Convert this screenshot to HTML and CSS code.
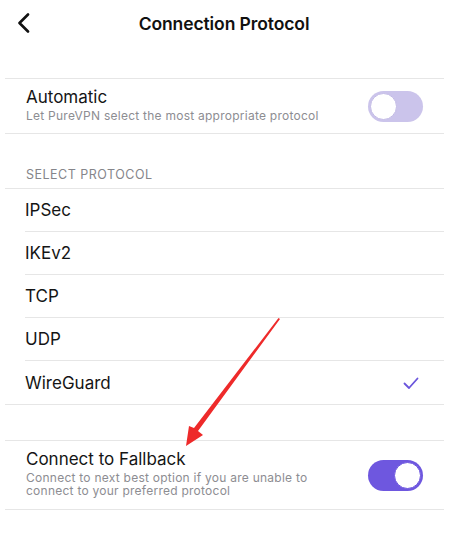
FILE: index.html
```html
<!DOCTYPE html>
<html>
<head>
<meta charset="utf-8">
<link rel="stylesheet" href="styles.css">
</head>
<body>
<div class="screen">
  <header class="topbar">
    <span class="back">
      <svg width="14" height="20" viewBox="0 0 14 20"><path d="M11 1.5 L2.5 10 L11 18.5" fill="none" stroke="#111" stroke-width="2.6" stroke-linecap="round" stroke-linejoin="round"/></svg>
    </span>
    <h1 class="title">Connection Protocol</h1>
    <span></span>
  </header>

  <section class="group first">
    <div class="setting">
      <div class="setting-text">
        <div class="setting-title">Automatic</div>
        <div class="setting-desc">Let PureVPN select the most appropriate protocol</div>
      </div>
      <span class="toggle off"><span class="knob"></span></span>
    </div>
  </section>

  <div class="section-label">SELECT PROTOCOL</div>
  <ul class="group protocols">
    <li class="proto">IPSec</li>
    <li class="proto">IKEv2</li>
    <li class="proto">TCP</li>
    <li class="proto">UDP</li>
    <li class="proto selected">WireGuard
      <svg class="check" width="16" height="13" viewBox="0 0 16 13"><path d="M1.5 6.5 L6 11 L14.5 1.5" fill="none" stroke="#6a55dc" stroke-width="1.8" stroke-linecap="round" stroke-linejoin="round"/></svg>
    </li>
  </ul>

  <section class="group fallback">
    <div class="setting tall">
      <div class="setting-text">
        <div class="setting-title big">Connect to Fallback</div>
        <div class="setting-desc wrap">Connect to next best option if you are unable to connect to your preferred protocol</div>
      </div>
      <span class="toggle on"><span class="knob"></span></span>
    </div>
  </section>

  <svg class="annot" width="465" height="550" viewBox="0 0 465 550">
    <path d="M280 319 L198 431 L203 435 L186 446 L189 426 L194 428 L278.5 318 Z" fill="#ee2a2a"/>
  </svg>
</div>
</body>
</html>
```
FILE: styles.css
```css
* { box-sizing: border-box; }
html, body { margin: 0; padding: 0; background: #fff; }
body { font-family: Inter, "Liberation Sans", Arial, sans-serif; color: #151515; }
.screen { position: relative; width: 465px; height: 550px; overflow: hidden; }

.topbar {
  height: 46px;
  display: grid;
  grid-template-columns: 1fr auto 1fr;
  align-items: center;
}
.back { padding-left: 17px; display: flex; align-items: center; }
.title { margin: 0; padding-right: 17px; font-size: 17.5px; font-weight: 600; letter-spacing: -0.1px; color: #111; }

.group {
  margin: 0 21px 0 5px;
  padding: 0;
  list-style: none;
  border-top: 1px solid #e6e6e6;
  border-bottom: 1px solid #e6e6e6;
}
.group.first { margin-top: 32px; }

.setting {
  height: 54px;
  display: flex;
  align-items: center;
  justify-content: space-between;
  padding: 0 21px 0 21px;
}
.setting.tall { height: 68px; }
.setting-title { font-size: 17px; line-height: 20px; color: #151515; margin-top: -3px; }
.setting-title.big { font-size: 17px; margin-top: -4px; }
.setting-desc { font-size: 12px; line-height: 13px; color: #8d8d92; letter-spacing: 0.25px; margin-top: 2px; }
.setting-desc.wrap { width: 300px; margin-top: 2px; }

.toggle {
  width: 55px;
  height: 31px;
  border-radius: 16px;
  display: flex;
  align-items: center;
  padding: 2px;
  flex: none;
}
.toggle .knob {
  width: 27px; height: 27px; border-radius: 50%;
  background: #fff;
}
.toggle.off { background: #cbc4eb; justify-content: flex-start; }
.toggle.off .knob { border: 1.5px solid #c3bbe6; }
.toggle.on { background: #6e57df; justify-content: flex-end; }
.toggle.on .knob { border: 1.5px solid #6e57df; }

.section-label {
  height: 54px;
  display: flex;
  align-items: flex-end;
  padding: 0 0 6px 26px;
  font-size: 12.5px;
  letter-spacing: 0.5px;
  color: #85858a;
}

.protocols .proto {
  margin-left: 20px;
  height: 43px;
  display: flex;
  align-items: center;
  justify-content: space-between;
  font-size: 17px;
  color: #151515;
  border-bottom: 1px solid #e6e6e6;
  padding-right: 25px;
}
.protocols .proto:last-child { border-bottom: none; }
.check { margin-top: 2px; }

.fallback { margin-top: 35px; }

.annot { position: absolute; left: 0; top: 0; pointer-events: none; }
```
